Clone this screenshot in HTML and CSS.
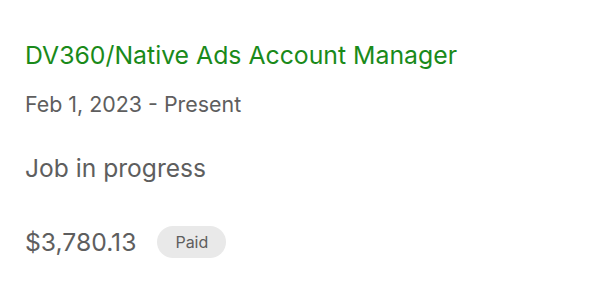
FILE: index.html
```html
<!DOCTYPE html>
<html lang="en">
  <head>
    <meta charset="UTF-8" />
    <meta name="viewport" content="width=device-width, initial-scale=1.0" />
    <title>Job</title>
    <link rel="stylesheet" href="styles.css">
  </head>
  <body>
    <div class="job">
      <h2 class="job-title">DV360/Native Ads Account Manager</h2>
      <p class="job-dates">Feb 1, 2023 - Present</p>
      <p class="job-status">Job in progress</p>
      <div class="job-earnings">
        <span class="amount">$3,780.13</span>
        <span class="badge">Paid</span>
      </div>
    </div>
  </body>
</html>
```

FILE: styles.css
```css
body {
  font-family: Inter, "Liberation Sans", sans-serif;
  margin: 0;
  padding: 0;
  background-color: #fff;
  color: #5e5e5e;
}
.job {
  padding: 40px 25px 0;
}
.job-title {
  margin: 0;
  font-size: 24.8px;
  font-weight: normal;
  line-height: 30px;
  color: #1a8a1a;
}
.job-dates {
  margin: 22px 0 0;
  font-size: 21.4px;
  line-height: 24px;
}
.job-status {
  margin: 37px 0 0;
  font-size: 24.6px;
  line-height: 30px;
}
.job-earnings {
  display: flex;
  align-items: center;
  gap: 21px;
  margin-top: 43px;
}
.amount {
  font-size: 24.7px;
  line-height: 32px;
}
.badge {
  background-color: #e9e9e9;
  border-radius: 16px;
  padding: 7px 18px;
  font-size: 16px;
  line-height: 18px;
}
```
